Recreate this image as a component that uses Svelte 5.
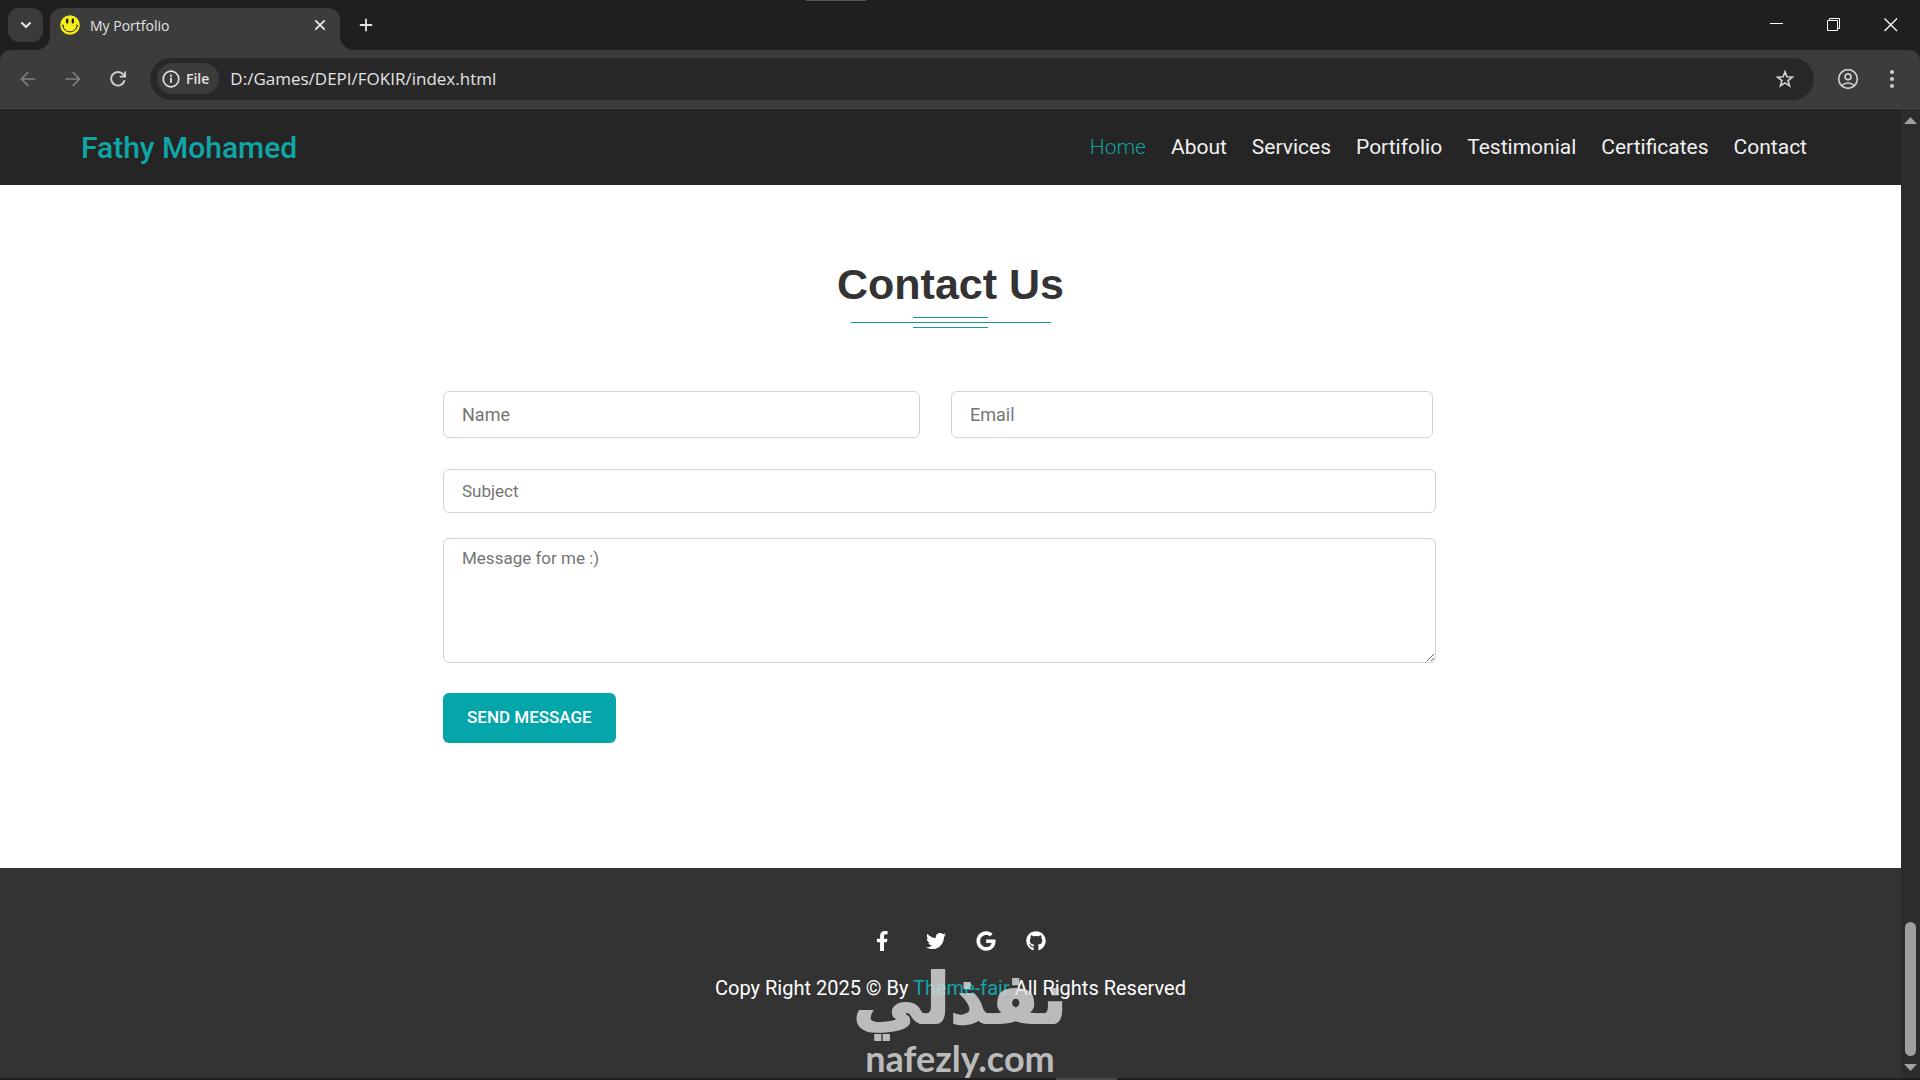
<script>
  const links = ['Home', 'About', 'Services', 'Portifolio', 'Testimonial', 'Certificates', 'Contact'];
  let active = $state('Home');

  const socials = [
    {
      name: 'Facebook',
      box: '0 0 512 512',
      d: 'M279.14 288l14.22-92.66h-88.91v-60.13c0-25.35 12.42-50.06 52.24-50.06h40.42V6.26S260.43 0 225.36 0c-73.22 0-121.08 44.38-121.08 124.72v70.62H22.89V288h81.39v224h100.17V288z'
    },
    {
      name: 'Twitter',
      box: '0 0 512 512',
      d: 'M459.37 151.716c.325 4.548.325 9.097.325 13.645 0 138.72-105.583 298.558-298.558 298.558-59.452 0-114.68-17.219-161.137-47.106 8.447.974 16.568 1.299 25.34 1.299 49.055 0 94.213-16.568 130.274-44.832-46.132-.975-84.792-31.188-98.112-72.772 6.498.974 12.995 1.624 19.818 1.624 9.421 0 18.843-1.3 27.614-3.573-48.081-9.747-84.143-51.98-84.143-102.985v-1.299c13.969 7.797 30.214 12.67 47.431 13.319-28.264-18.843-46.781-51.005-46.781-87.391 0-19.492 5.197-37.36 14.294-52.954 51.655 63.675 129.3 105.258 216.365 109.807-1.624-7.797-2.599-15.918-2.599-24.04 0-57.828 46.782-104.934 104.934-104.934 30.213 0 57.502 12.67 76.67 33.137 23.715-4.548 46.456-13.32 66.599-25.34-7.798 24.366-24.366 44.833-46.132 57.827 21.117-2.273 41.584-8.122 60.426-16.243-14.292 20.791-32.161 39.308-52.628 54.253z'
    },
    {
      name: 'Google',
      box: '0 0 488 512',
      d: 'M488 261.8C488 403.3 391.1 504 248 504 110.8 504 0 393.2 0 256S110.8 8 248 8c66.8 0 123 24.5 166.3 64.9l-67.5 64.9C258.5 52.6 94.3 116.6 94.3 256c0 86.5 69.1 156.6 153.7 156.6 98.2 0 135-70.4 140.8-106.9H248v-85.3h236.1c2.3 12.7 3.9 24.9 3.9 41.4z'
    },
    {
      name: 'GitHub',
      box: '0 0 496 512',
      d: 'M165.9 397.4c0 2-2.3 3.6-5.2 3.6-3.3.3-5.6-1.3-5.6-3.6 0-2 2.3-3.6 5.2-3.6 3-.3 5.6 1.3 5.6 3.6zm-31.1-4.5c-.7 2 1.3 4.3 4.3 4.9 2.6 1 5.6 0 6.2-2s-1.3-4.3-4.3-5.2c-2.6-.7-5.5.3-6.2 2.3zm44.2-1.7c-2.9.7-4.9 2.6-4.6 4.9.3 2 2.9 3.3 5.9 2.6 2.9-.7 4.9-2.6 4.6-4.6-.3-1.9-3-3.2-5.9-2.9zM244.8 8C106.1 8 0 113.3 0 252c0 110.9 69.8 205.8 169.5 239.2 12.8 2.3 17.3-5.6 17.3-12.1 0-6.2-.3-40.4-.3-61.4 0 0-70 15-84.7-29.8 0 0-11.4-29.1-27.8-36.6 0 0-22.9-15.7 1.6-15.4 0 0 24.9 2 38.6 25.8 21.9 38.6 58.6 27.5 72.9 20.9 2.3-16 8.8-27.1 16-33.7-55.9-6.2-112.3-14.3-112.3-110.5 0-27.5 7.6-41.3 23.6-58.9-2.6-6.5-11.1-33.3 2.6-67.9 20.9-6.5 69 27 69 27 20-5.6 41.5-8.5 62.8-8.5s42.8 2.9 62.8 8.5c0 0 48.1-33.6 69-27 13.7 34.7 5.2 61.4 2.6 67.9 16 17.7 25.8 31.5 25.8 58.9 0 96.5-58.9 104.2-114.8 110.5 9.2 7.9 17 22.9 17 46.4 0 33.7-.3 75.4-.3 83.6 0 6.5 4.6 14.4 17.3 12.1C428.2 457.8 496 362.9 496 252 496 113.3 383.5 8 244.8 8z'
    }
  ];
</script>

<div class="window">
  <div class="strip">
    <button class="search-tabs" aria-label="Search tabs">
      <svg width="12" height="8" viewBox="0 0 12 8"><path d="M1.5 1.5 6 6l4.500-4.500" fill="none" stroke="currentColor" stroke-width="2.200" /></svg>
    </button>
    <div class="tab">
      <svg class="favicon" width="20" height="20" viewBox="0 0 20 20">
        <circle cx="10" cy="10" r="9.800" fill="#f5ec1c" />
        <ellipse cx="7.200" cy="6" rx="1.200" ry="2.700" fill="#17150a" />
        <ellipse cx="12.800" cy="6" rx="1.200" ry="2.700" fill="#17150a" />
        <path d="M2.800 10.200c.6 4.400 3.600 6.600 7.200 6.600s6.600-2.200 7.200-6.600M2 10.800l1.700-.9M18 10.800l-1.700-.9" fill="none" stroke="#17150a" stroke-width="1" />
      </svg>
      <span class="tab-title">My Portfolio</span>
      <button class="icon" aria-label="Close tab">
        <svg width="12" height="12" viewBox="0 0 12 12"><path d="M1.300 1.300l9.400 9.400M10.700 1.300 1.300 10.700" stroke="currentColor" stroke-width="1.900" /></svg>
      </button>
    </div>
    <button class="icon new-tab" aria-label="New tab">
      <svg width="14" height="14" viewBox="0 0 14 14"><path d="M7 .8v12.400M.8 7h12.400" stroke="currentColor" stroke-width="1.800" /></svg>
    </button>
    <div class="controls">
      <button class="icon" aria-label="Minimize"><svg width="14" height="14" viewBox="0 0 14 14"><path d="M0 5.500h13" stroke="currentColor" /></svg></button>
      <button class="icon" aria-label="Restore"><svg width="14" height="14" viewBox="0 0 14 14"><path d="M.5 2.500h10v10H.5zM2.500 2.500v-2h10v10h-2" fill="none" stroke="currentColor" /></svg></button>
      <button class="icon" aria-label="Close"><svg width="14" height="14" viewBox="0 0 14 14"><path d="M.5.5l12.500 12.500M13 .5.5 13" stroke="currentColor" stroke-width="1.300" /></svg></button>
    </div>
  </div>

  <div class="toolbar">
    <div class="history">
      <button class="icon dim" aria-label="Back"><svg width="16" height="16" viewBox="0 0 16 16"><path d="M15.500 8H1.800M8.300 1.200 1.500 8l6.800 6.800" fill="none" stroke="currentColor" stroke-width="1.700" /></svg></button>
      <button class="icon dim" aria-label="Forward"><svg width="16" height="16" viewBox="0 0 16 16"><path d="M.5 8h13.700M7.700 1.200 14.500 8l-6.800 6.800" fill="none" stroke="currentColor" stroke-width="1.700" /></svg></button>
      <button class="icon" aria-label="Reload"><svg width="16" height="16" viewBox="0 0 16 16"><path d="M14.600 9.300A6.800 6.800 0 1 1 13.200 3.400l1.600 1.700M15.100.4v5.200H9.700" fill="none" stroke="currentColor" stroke-width="1.900" /></svg></button>
    </div>
    <div class="omnibox">
      <button class="chip">
        <svg width="18" height="18" viewBox="0 0 18 18"><circle cx="9" cy="9" r="7.800" fill="none" stroke="currentColor" stroke-width="1.700" /><path d="M9 7.800v5M9 4.800v1.900" stroke="currentColor" stroke-width="1.800" /></svg>
        File
      </button>
      <input class="address" type="text" aria-label="Address" value="D:/Games/DEPI/FOKIR/index.html" />
      <button class="icon" aria-label="Bookmark this page"><svg width="20" height="20" viewBox="0 0 20 20"><path d="M10 2.900l1.900 4.900 5.400.4-4.200 3.400 1.400 5.200L10 13.900l-4.500 2.900 1.400-5.200L2.700 8.200l5.400-.4z" fill="none" stroke="currentColor" stroke-width="1.700" /></svg></button>
    </div>
    <button class="icon" aria-label="Profile"><svg width="22" height="22" viewBox="0 0 22 22"><g fill="none" stroke="currentColor" stroke-width="1.700"><circle cx="11" cy="11" r="9.300" /><circle cx="11" cy="8.800" r="3" /><path d="M4.800 17.500c1.700-1.700 3.800-2.500 6.200-2.500s4.500.8 6.200 2.500" /></g></svg></button>
    <button class="icon" aria-label="Menu"><svg width="20" height="20" viewBox="0 0 20 20" fill="currentColor"><circle cx="10" cy="3" r="2" /><circle cx="10" cy="10" r="2" /><circle cx="10" cy="17" r="2" /></svg></button>
  </div>

  <div class="viewport">
    <div class="page">
      <header>
        <a class="brand" href="#home">Fathy Mohamed</a>
        <nav>
          {#each links as link}
            <a href="#{link.toLowerCase()}" class:active={active === link} onclick={() => (active = link)}>{link}</a>
          {/each}
        </nav>
      </header>

      <main>
        <h1>Contact Us</h1>
        <div class="rule"><span></span><span class="long"></span><span></span></div>
        <form onsubmit={(e) => e.preventDefault()}>
          <div class="pair">
            <input type="text" placeholder="Name" aria-label="Name" />
            <input type="email" placeholder="Email" aria-label="Email" />
          </div>
          <input class="subject" type="text" placeholder="Subject" aria-label="Subject" />
          <textarea placeholder="Message for me :)" aria-label="Message"></textarea>
          <button class="send" type="submit">SEND MESSAGE</button>
        </form>
      </main>

      <footer>
        <div class="socials">
          {#each socials as s}
            <a href="#{s.name.toLowerCase()}" aria-label={s.name}>
              <svg width="20" height="20" viewBox={s.box} fill="currentColor"><path d={s.d} /></svg>
            </a>
          {/each}
        </div>
        <p>Copy Right 2025 © By <a href="#theme-fair">Theme-fair</a> All Rights Reserved</p>
      </footer>
    </div>
    <div class="scrollbar">
      <svg width="13" height="7" viewBox="0 0 13 7"><path d="M6.500 0 13 7H0z" fill="#a0a0a0" /></svg>
      <div class="thumb"></div>
      <svg width="13" height="7" viewBox="0 0 13 7"><path d="M6.500 7 13 0H0z" fill="#a0a0a0" /></svg>
    </div>
  </div>

  <div class="taskbar"></div>
  <div class="handle"></div>

  <div class="watermark">
    <span class="arabic" lang="ar" dir="rtl">نفذلي</span>
    <span class="latin">nafezly.com</span>
  </div>
</div>

<style>
  :global(body) {
    margin: 0;
  }
  * {
    box-sizing: border-box;
  }
  .window {
    position: relative;
    display: flex;
    flex-direction: column;
    min-height: 100vh;
    overflow: hidden;
    background: #1f1f1f;
    color: #e3e3e3;
    font-family: 'Open Sans', 'Noto Sans', sans-serif;
  }
  button {
    border: 0;
    padding: 0;
    background: none;
    color: inherit;
    font: inherit;
  }
  svg {
    display: block;
  }
  a {
    color: inherit;
    text-decoration: none;
  }
  .icon {
    display: grid;
    place-items: center;
  }

  .strip {
    display: flex;
    align-items: center;
    height: 50px;
    padding-left: 8px;
  }
  .search-tabs {
    display: grid;
    place-items: center;
    width: 35px;
    height: 34px;
    border-radius: 11px;
    background: #3b3b3b;
  }
  .tab {
    position: relative;
    display: flex;
    align-items: center;
    gap: 10px;
    align-self: flex-end;
    width: 290px;
    height: 42px;
    margin-left: 7px;
    padding: 0 14px 8px 10px;
    border-radius: 12px 12px 0 0;
    background: #3c3c3c;
  }
  .tab::before,
  .tab::after {
    content: '';
    position: absolute;
    bottom: 0;
    width: 14px;
    height: 14px;
  }
  .tab::before {
    right: 100%;
    background: radial-gradient(circle at 0 0, transparent 14px, #3c3c3c 14px);
  }
  .tab::after {
    left: 100%;
    background: radial-gradient(circle at 100% 0, transparent 14px, #3c3c3c 14px);
  }
  .tab-title {
    flex: 1;
    font-size: 14px;
  }
  .new-tab {
    margin-left: 19px;
  }
  .controls {
    display: flex;
    gap: 43px;
    margin-left: auto;
    padding-right: 22px;
    color: #fff;
  }

  .toolbar {
    display: flex;
    align-items: center;
    gap: 23px;
    height: 59px;
    padding: 0 18px 1px 20px;
    border-bottom: 1px solid #474747;
    border-radius: 10px 10px 0 0;
    background: #3c3c3c;
    color: #cfcfcf;
  }
  .history {
    display: flex;
    gap: 29px;
    margin-right: 1px;
  }
  .dim {
    color: #7d7d7d;
  }
  .omnibox {
    display: flex;
    flex: 1;
    align-items: center;
    gap: 11px;
    height: 42px;
    padding: 0 19px 0 7px;
    border-radius: 21px;
    background: #282828;
  }
  .chip {
    display: flex;
    align-items: center;
    gap: 6px;
    height: 31px;
    padding: 0 10px 0 5px;
    border-radius: 16px;
    background: #3c3c3c;
    color: #e3e3e3;
    font-size: 14px;
    font-weight: 600;
  }
  .address {
    flex: 1;
    padding: 0;
    border: 0;
    outline: 0;
    background: none;
    color: #e3e3e3;
    font: 17px 'Open Sans', 'Noto Sans', sans-serif;
  }

  .viewport {
    display: flex;
    flex: 1;
    font-family: Roboto, sans-serif;
  }
  .page {
    display: flex;
    flex: 1;
    flex-direction: column;
  }
  header {
    display: flex;
    align-items: center;
    justify-content: space-between;
    height: 76px;
    padding: 0 94px 0 81px;
    background: #252525;
  }
  .brand {
    color: #10a5a8;
    font-size: 30px;
    font-weight: 500;
  }
  nav {
    display: flex;
    gap: 25px;
    color: #f0f0f0;
    font-size: 21px;
  }
  .active {
    color: #10a09c;
    font-weight: 300;
  }

  main {
    flex: 1;
    padding: 74px 24px 125px;
    background: #fff;
  }
  h1 {
    margin: 0;
    color: #333;
    font: 700 43px/50px 'Liberation Sans', Arial, sans-serif;
    text-align: center;
  }
  .rule {
    display: grid;
    justify-items: center;
    gap: 4px;
    margin: 8px 0 63px;
  }
  .rule span {
    width: 75px;
    height: 1px;
    background: #16979e;
  }
  .rule .long {
    width: 200px;
  }
  form {
    display: flex;
    flex-direction: column;
    max-width: 1015px;
    margin: 0 auto;
    padding-right: 22px;
  }
  .pair {
    display: grid;
    grid-template-columns: 477fr 482fr;
    gap: 31px;
    margin: 0 3px 31px 0;
  }
  form input,
  textarea {
    width: 100%;
    padding: 0 18px;
    border: 1px solid #d3d3d3;
    border-radius: 6px;
    background: #fff;
    color: #333;
    font: 17px/24px Roboto, sans-serif;
  }
  form input::placeholder,
  textarea::placeholder {
    color: #757575;
  }
  .pair input {
    height: 47px;
    font-size: 18px;
  }
  .subject {
    height: 44px;
    margin-bottom: 25px;
  }
  textarea {
    display: block;
    height: 125px;
    margin-bottom: 30px;
    padding-top: 7px;
    resize: vertical;
  }
  .send {
    align-self: flex-start;
    height: 50px;
    padding: 0 24px 2px;
    border-radius: 6px;
    background: #04a6aa;
    color: #fff;
    font-size: 17px;
    font-weight: 500;
  }

  footer {
    display: flex;
    flex-direction: column;
    align-items: center;
    gap: 24px;
    height: 210px;
    padding-top: 63px;
    background: #333;
    color: #fff;
  }
  .socials {
    display: flex;
    gap: 30px;
    padding-left: 20px;
  }
  footer p {
    margin: 0;
    font-size: 20px;
    line-height: 26px;
  }
  footer p a {
    color: #10a5a8;
  }

  .scrollbar {
    display: flex;
    flex-direction: column;
    align-items: center;
    width: 19px;
    padding: 8px 0 7px;
    background: #2c2c2c;
  }
  .thumb {
    width: 11px;
    height: 134px;
    margin: auto 0 8px;
    border-radius: 6px;
    background: #9f9f9f;
  }
  .taskbar {
    height: 2px;
    background: #1f1c1e;
  }
  .taskbar::after {
    content: '';
    display: block;
    width: 61px;
    height: 2px;
    margin-left: 55%;
    background: #4a484a;
  }
  .handle {
    position: absolute;
    top: 0;
    left: 42%;
    width: 60px;
    height: 1px;
    background: #555;
  }

  .watermark {
    position: absolute;
    bottom: 0;
    left: 50%;
    display: flex;
    flex-direction: column;
    align-items: center;
    transform: translateX(-50%);
    color: #dedede;
    opacity: 0.8;
    pointer-events: none;
  }
  .arabic {
    font: 700 70px/74px 'DejaVu Sans', sans-serif;
    -webkit-text-stroke: 2px #dedede;
    paint-order: stroke fill;
  }
  .latin {
    font: 700 36px/44px Lato, sans-serif;
  }
</style>
